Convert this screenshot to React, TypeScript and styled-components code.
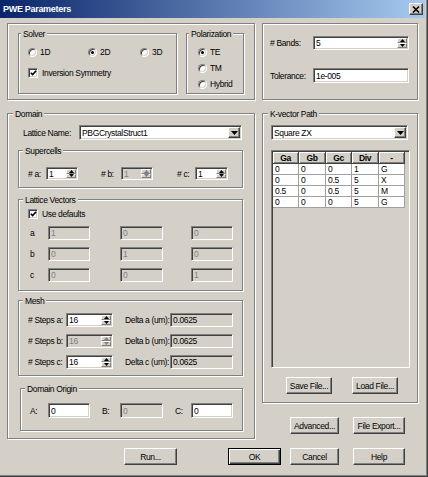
import React from "react";
import styled, { createGlobalStyle, css } from "styled-components";

const FONT = `"Liberation Sans", Arial, sans-serif`;

const GlobalStyle = createGlobalStyle`
  html, body { margin: 0; padding: 0; background: #d4d0c8; }
  body { font-family: ${FONT}; font-size: 8.5px; letter-spacing: -0.35px; color: #000; }
  *, *::before, *::after { box-sizing: border-box; }
`;

const Window = styled.div`
  width: 428px;
  height: 477px;
  background: #d4d0c8;
  display: flex;
  flex-direction: column;
  box-shadow: inset -1px -1px 0 #404040, inset -2px -2px 0 #808080;
  overflow: hidden;
`;

const TitleBar = styled.div`
  flex: none;
  height: 18px;
  width: 425px;
  background: linear-gradient(to right, #0a246a, #a6caf0);
  display: flex;
  align-items: center;
  justify-content: space-between;
  padding: 0 2px 0 3px;
`;

const Title = styled.span`
  color: #fff;
  font-weight: bold;
  font-size: 9px;
  letter-spacing: -0.3px;
`;

const CloseBtn = styled.span`
  width: 14px;
  height: 12px;
  display: flex;
  align-items: center;
  justify-content: center;
  background: #d4d0c8;
  border: 1px solid;
  border-color: #fff #404040 #404040 #fff;
  box-shadow: inset -1px -1px 0 #808080;
`;

const Body = styled.div`
  display: flex;
  flex-direction: column;
  padding: 5px 0 0 7px;
`;

const Row = styled.div<{ $gap?: number; $mt?: number; $pl?: number }>`
  display: flex;
  align-items: flex-start;
  gap: ${(p) => p.$gap ?? 0}px;
  margin-top: ${(p) => p.$mt ?? 0}px;
  padding-left: ${(p) => p.$pl ?? 0}px;
`;

const Column = styled.div`
  display: flex;
  flex-direction: column;
`;

const etched = css`
  border: 1px solid #808080;
  box-shadow: inset 1px 1px 0 #fff, 1px 1px 0 #fff;
`;

const Panel = styled.div<{ $w: number; $h: number }>`
  flex: none;
  width: ${(p) => p.$w}px;
  height: ${(p) => p.$h}px;
  ${etched}
`;

const SolverPanel = styled(Panel)`
  display: flex;
  align-items: flex-start;
  gap: 9px;
  padding: 9px 0 0 10px;
`;

const BandsPanel = styled(Panel)`
  display: grid;
  grid-template-columns: 43px 96px;
  grid-template-rows: 14px 15px;
  row-gap: 18px;
  align-items: center;
  align-content: start;
  padding: 12px 0 0 7px;
`;

const Group = styled.div<{ $w: number; $h: number; $ml?: number; $mt?: number }>`
  position: relative;
  flex: none;
  width: ${(p) => p.$w}px;
  height: ${(p) => p.$h}px;
  margin-left: ${(p) => p.$ml ?? 0}px;
  margin-top: ${(p) => p.$mt ?? 0}px;
  ${etched}
`;

const GroupLabel = styled.span<{ $x: number }>`
  position: absolute;
  top: -5px;
  left: ${(p) => p.$x}px;
  padding: 0 2px;
  background: #d4d0c8;
  line-height: 10px;
  white-space: nowrap;
`;

const Stack = styled.div<{ $pt: number; $pl: number; $gap?: number }>`
  display: flex;
  flex-direction: column;
  align-items: flex-start;
  padding: ${(p) => p.$pt}px 0 0 ${(p) => p.$pl}px;
  gap: ${(p) => p.$gap ?? 0}px;
`;

const SolverRadios = styled.div`
  display: grid;
  grid-template-columns: 60px 52px auto;
`;

const Option = styled.label`
  display: flex;
  align-items: center;
  gap: 3px;
  height: 12px;
  white-space: nowrap;
`;

const sunken = css`
  border: 1px solid;
  border-color: #808080 #fff #fff #808080;
  box-shadow: inset 1px 1px 0 #404040, inset -1px -1px 0 #d4d0c8;
`;

const RadioCircle = styled.span<{ $on?: boolean }>`
  flex: none;
  width: 9px;
  height: 9px;
  border-radius: 50%;
  background: #fff;
  ${sunken}
  display: flex;
  align-items: center;
  justify-content: center;
  &::after {
    content: "";
    width: 3px;
    height: 3px;
    border-radius: 50%;
    background: ${(p) => (p.$on ? "#000" : "transparent")};
  }
`;

const CheckBox = styled.span`
  flex: none;
  width: 10px;
  height: 10px;
  background: #fff;
  ${sunken}
  display: flex;
  align-items: center;
  justify-content: center;
`;

const Label = styled.span<{ $w?: number; $ml?: number; $pl?: number }>`
  flex: none;
  ${(p) => (p.$w ? `width: ${p.$w}px;` : "")}
  margin-left: ${(p) => p.$ml ?? 0}px;
  padding-left: ${(p) => p.$pl ?? 0}px;
  white-space: nowrap;
`;

const Field = styled.div<{ $w: number; $h?: number; $gray?: boolean; $dim?: boolean }>`
  flex: none;
  width: ${(p) => p.$w}px;
  height: ${(p) => p.$h ?? 14}px;
  display: flex;
  align-items: stretch;
  background: ${(p) => (p.$gray ? "#d4d0c8" : "#fff")};
  color: ${(p) => (p.$dim ? "#808080" : "#000")};
  ${sunken}
  padding: 1px 1px 1px 2px;
  overflow: hidden;
`;

const FieldText = styled.span`
  flex: 1;
  display: flex;
  align-items: center;
  white-space: nowrap;
  overflow: hidden;
`;

const SpinCol = styled.span`
  flex: none;
  width: 10px;
  display: flex;
  flex-direction: column;
`;

const SpinBtn = styled.span`
  flex: 1;
  min-height: 0;
  display: flex;
  align-items: center;
  justify-content: center;
  background: #d4d0c8;
  border: 1px solid;
  border-color: #fff #808080 #808080 #fff;
`;

const DropBtn = styled.span`
  flex: none;
  width: 12px;
  display: flex;
  align-items: center;
  justify-content: center;
  background: #d4d0c8;
  border: 1px solid;
  border-color: #fff #404040 #404040 #fff;
  box-shadow: inset -1px -1px 0 #808080;
`;

const Button = styled.button<{ $w: number; $ml?: number; $default?: boolean }>`
  flex: none;
  width: ${(p) => p.$w}px;
  height: 17px;
  margin: 0 0 0 ${(p) => p.$ml ?? 0}px;
  padding: 0;
  font-family: ${FONT};
  font-size: 8.5px;
  letter-spacing: -0.35px;
  white-space: nowrap;
  color: #000;
  background: #d4d0c8;
  border: 1px solid;
  border-color: #fff #404040 #404040 #fff;
  box-shadow: inset -1px -1px 0 #808080;
  ${(p) =>
    p.$default &&
    css`
      border-color: #000;
      box-shadow: inset 1px 1px 0 #fff, inset -1px -1px 0 #404040, inset -2px -2px 0 #808080;
    `}
`;

const LatticeRow = styled.div`
  display: flex;
  align-items: center;
  margin-left: 5px;
`;

const SuperRow = styled.div`
  display: flex;
  align-items: center;
  padding: 16px 0 0 9px;
`;

const VecGrid = styled.div`
  display: grid;
  grid-template-columns: 18px 72px 71px 42px;
  grid-auto-rows: 14px;
  row-gap: 7px;
  align-items: center;
  margin: 6px 0 0 11px;
`;

const MeshGrid = styled.div`
  display: grid;
  grid-template-columns: 38px 47px 57px 63px;
  grid-auto-rows: 14px;
  row-gap: 7px;
  align-items: center;
  padding: 12px 0 0 9px;
`;

const OriginGrid = styled.div`
  display: grid;
  grid-template-columns: 18px 54px 18px 55px 16px 42px;
  grid-auto-rows: 15px;
  align-items: center;
  padding: 14px 0 0 9px;
`;

const KTable = styled.div`
  width: 139px;
  height: 218px;
  margin-top: 10px;
  background: #d4d0c8;
  ${sunken}
  padding: 1px 0 0 1px;
`;

const KGrid = styled.div`
  display: grid;
  grid-template-columns: 26px 27px 26px 27px 26px;
  grid-template-rows: 12px repeat(4, 11px);
`;

const HeadCell = styled.div`
  display: flex;
  align-items: center;
  justify-content: center;
  font-weight: bold;
  background: #d4d0c8;
  border-right: 1px solid #404040;
  border-bottom: 1px solid #404040;
  box-shadow: inset 1px 1px 0 #fff, inset -1px -1px 0 #808080;
`;

const DataCell = styled.div`
  display: flex;
  align-items: center;
  padding-left: 2px;
  background: #fff;
  border-right: 1px solid #a0a0a0;
  border-bottom: 1px solid #a0a0a0;
`;

const Up = ({ dim }: { dim?: boolean }) => (
  <svg width="5" height="3" viewBox="0 0 5 3">
    <polygon points="2.5,0 5,3 0,3" fill={dim ? "#808080" : "#000"} />
  </svg>
);
const Down = ({ dim, w = 5, h = 3 }: { dim?: boolean; w?: number; h?: number }) => (
  <svg width={w} height={h} viewBox={`0 0 ${w} ${h}`}>
    <polygon points={`0,0 ${w},0 ${w / 2},${h}`} fill={dim ? "#808080" : "#000"} />
  </svg>
);

const Radio = ({ on, children }: { on?: boolean; children: React.ReactNode }) => (
  <Option>
    <RadioCircle $on={on} />
    {children}
  </Option>
);

const Check = ({ children }: { children: React.ReactNode }) => (
  <Option>
    <CheckBox>
      <svg width="7" height="6" viewBox="0 0 7 6">
        <path d="M0.8 2.8 L2.6 4.6 L6.2 0.8" stroke="#000" strokeWidth="1.6" fill="none" />
      </svg>
    </CheckBox>
    <span style={{ marginLeft: 1 }}>{children}</span>
  </Option>
);

const Spin = ({ w, h, value, dim }: { w: number; h?: number; value: string; dim?: boolean }) => (
  <Field $w={w} $h={h} $gray={dim} $dim={dim}>
    <FieldText>{value}</FieldText>
    <SpinCol>
      <SpinBtn>
        <Up dim={dim} />
      </SpinBtn>
      <SpinBtn>
        <Down dim={dim} />
      </SpinBtn>
    </SpinCol>
  </Field>
);

const Combo = ({ w, value }: { w: number; value: string }) => (
  <Field $w={w} $h={15}>
    <FieldText>{value}</FieldText>
    <DropBtn>
      <Down w={7} h={4} />
    </DropBtn>
  </Field>
);

const Text = ({ w, h, value, gray, dim }: { w: number; h?: number; value: string; gray?: boolean; dim?: boolean }) => (
  <Field $w={w} $h={h} $gray={gray} $dim={dim}>
    <FieldText>{value}</FieldText>
  </Field>
);

const kRows = [
  ["0", "0", "0", "1", "G"],
  ["0", "0", "0.5", "5", "X"],
  ["0.5", "0", "0.5", "5", "M"],
  ["0", "0", "0", "5", "G"],
];

const vectors = [
  ["a", "1", "0", "0"],
  ["b", "0", "1", "0"],
  ["c", "0", "0", "1"],
];

const mesh = [
  ["a", false],
  ["b", true],
  ["c", false],
] as const;

export default function App() {
  return (
    <>
      <GlobalStyle />
      <Window>
        <TitleBar>
          <Title>PWE Parameters</Title>
          <CloseBtn>
            <svg width="8" height="7" viewBox="0 0 8 7">
              <path d="M1 0.5 L7 6.5 M7 0.5 L1 6.5" stroke="#000" strokeWidth="1.6" />
            </svg>
          </CloseBtn>
        </TitleBar>
        <Body>
          <Row $gap={7}>
            <SolverPanel $w={248} $h={77}>
              <Group $w={159} $h={61}>
                <GroupLabel $x={2}>Solver</GroupLabel>
                <Stack $pt={12} $pl={9} $gap={9}>
                  <SolverRadios>
                    <Radio>1D</Radio>
                    <Radio on>2D</Radio>
                    <Radio>3D</Radio>
                  </SolverRadios>
                  <Check>Inversion Symmetry</Check>
                </Stack>
              </Group>
              <Group $w={58} $h={61}>
                <GroupLabel $x={2}>Polarization</GroupLabel>
                <Stack $pt={12} $pl={11} $gap={4}>
                  <Radio on>TE</Radio>
                  <Radio>TM</Radio>
                  <Radio>Hybrid</Radio>
                </Stack>
              </Group>
            </SolverPanel>
            <BandsPanel $w={156} $h={77}>
              <Label># Bands:</Label>
              <Spin w={96} value="5" />
              <Label>Tolerance:</Label>
              <Text w={96} h={15} value="1e-005" />
            </BandsPanel>
          </Row>

          <Row $gap={7} $mt={13}>
            <Group $w={248} $h={326}>
              <GroupLabel $x={5}>Domain</GroupLabel>
              <Stack $pt={11} $pl={10}>
                <LatticeRow>
                  <Label $w={56}>Lattice Name:</Label>
                  <Combo w={163} value="PBGCrystalStruct1" />
                </LatticeRow>

                <Group $w={225} $h={38} $mt={10}>
                  <GroupLabel $x={4}>Supercells</GroupLabel>
                  <SuperRow>
                    <Label $w={18}># a:</Label>
                    <Spin w={32} h={13} value="1" />
                    <Label $w={20} $ml={23}># b:</Label>
                    <Spin w={32} h={13} value="1" dim />
                    <Label $w={18} $ml={24}># c:</Label>
                    <Spin w={33} h={13} value="1" />
                  </SuperRow>
                </Group>

                <Group $w={225} $h={92} $mt={11}>
                  <GroupLabel $x={4}>Lattice Vectors</GroupLabel>
                  <Stack $pt={8} $pl={9}>
                    <Check>Use defaults</Check>
                  </Stack>
                  <VecGrid>
                    {vectors.map(([n, x, y, z]) => (
                      <React.Fragment key={n}>
                        <Label>{n}</Label>
                        <Text w={42} value={x} gray dim />
                        <Text w={43} value={y} gray dim />
                        <Text w={42} value={z} gray dim />
                      </React.Fragment>
                    ))}
                  </VecGrid>
                </Group>

                <Group $w={225} $h={76} $mt={9}>
                  <GroupLabel $x={4}>Mesh</GroupLabel>
                  <MeshGrid>
                    {mesh.map(([n, dim]) => (
                      <React.Fragment key={n}>
                        <Label># Steps {n}:</Label>
                        <Spin w={47} value="16" dim={dim} />
                        <Label $pl={12}>Delta {n} (um):</Label>
                        <Text w={63} value="0.0625" gray />
                      </React.Fragment>
                    ))}
                  </MeshGrid>
                </Group>

                <Group $w={223} $h={43} $mt={12} $ml={2}>
                  <GroupLabel $x={4}>Domain Origin</GroupLabel>
                  <OriginGrid>
                    <Label>A:</Label>
                    <Text w={42} h={15} value="0" />
                    <Label>B:</Label>
                    <Text w={43} h={15} value="0" gray dim />
                    <Label>C:</Label>
                    <Text w={42} h={15} value="0" />
                  </OriginGrid>
                </Group>
              </Stack>
            </Group>

            <Column>
              <Group $w={156} $h={290}>
                <GroupLabel $x={5}>K-vector Path</GroupLabel>
                <Stack $pt={11} $pl={8}>
                  <Combo w={137} value="Square ZX" />
                  <KTable>
                    <KGrid>
                      {["Ga", "Gb", "Gc", "Div", "-"].map((h) => (
                        <HeadCell key={h}>{h}</HeadCell>
                      ))}
                      {kRows.map((r, i) =>
                        r.map((v, j) => <DataCell key={`${i}-${j}`}>{v}</DataCell>)
                      )}
                    </KGrid>
                  </KTable>
                  <Row $mt={9} $pl={15}>
                    <Button $w={46}>Save File...</Button>
                    <Button $w={46} $ml={20}>Load File...</Button>
                  </Row>
                </Stack>
              </Group>
              <Row $mt={14} $pl={28}>
                <Button $w={49}>Advanced...</Button>
                <Button $w={52} $ml={14}>File Export...</Button>
              </Row>
            </Column>
          </Row>

          <Row $mt={9}>
            <Button $w={53} $ml={117}>Run...</Button>
            <Button $w={53} $ml={51} $default>OK</Button>
            <Button $w={49} $ml={9}>Cancel</Button>
            <Button $w={52} $ml={14}>Help</Button>
          </Row>
        </Body>
      </Window>
    </>
  );
}
